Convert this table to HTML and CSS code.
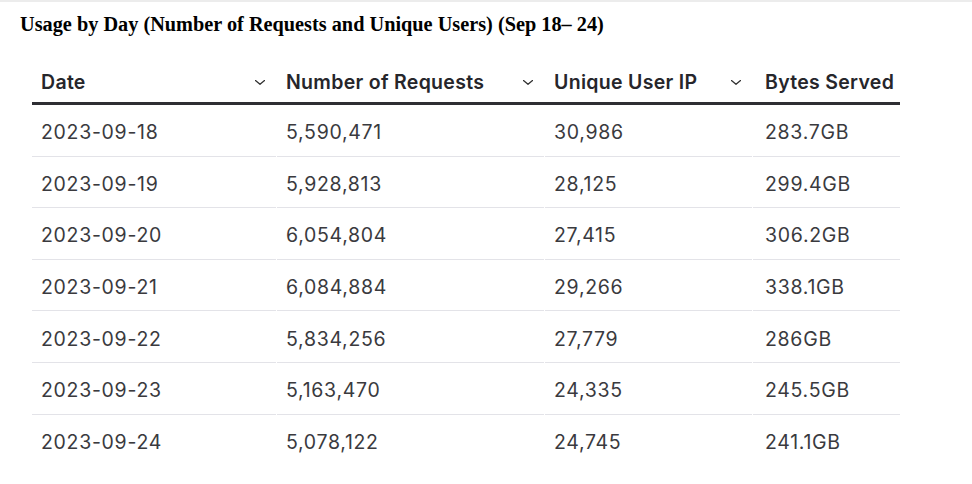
FILE: index.html
```html
<!DOCTYPE html>
<html>
<head>
<meta charset="utf-8">
<link rel="stylesheet" href="styles.css">
</head>
<body>
<div class="topbar"></div>
<h1 class="title">Usage by Day (Number of Requests and Unique Users) (Sep 18– 24)</h1>
<div class="table">
  <div class="row head">
    <div class="cell"><span>Date</span><svg class="chev" viewBox="0 0 10 5"><path d="M0.5 0.5 L5 4.3 L9.5 0.5"/></svg></div>
    <div class="cell"><span>Number of Requests</span><svg class="chev" viewBox="0 0 10 5"><path d="M0.5 0.5 L5 4.3 L9.5 0.5"/></svg></div>
    <div class="cell"><span>Unique User IP</span><svg class="chev" viewBox="0 0 10 5"><path d="M0.5 0.5 L5 4.3 L9.5 0.5"/></svg></div>
    <div class="cell last"><span>Bytes Served</span></div>
  </div>
  <div class="row"><div class="cell">2023-09-18</div><div class="cell">5,590,471</div><div class="cell">30,986</div><div class="cell last">283.7GB</div></div>
  <div class="row"><div class="cell">2023-09-19</div><div class="cell">5,928,813</div><div class="cell">28,125</div><div class="cell last">299.4GB</div></div>
  <div class="row"><div class="cell">2023-09-20</div><div class="cell">6,054,804</div><div class="cell">27,415</div><div class="cell last">306.2GB</div></div>
  <div class="row"><div class="cell">2023-09-21</div><div class="cell">6,084,884</div><div class="cell">29,266</div><div class="cell last">338.1GB</div></div>
  <div class="row"><div class="cell">2023-09-22</div><div class="cell">5,834,256</div><div class="cell">27,779</div><div class="cell last">286GB</div></div>
  <div class="row"><div class="cell">2023-09-23</div><div class="cell">5,163,470</div><div class="cell">24,335</div><div class="cell last">245.5GB</div></div>
  <div class="row nob"><div class="cell">2023-09-24</div><div class="cell">5,078,122</div><div class="cell">24,745</div><div class="cell last">241.1GB</div></div>
</div>
</body>
</html>
```
FILE: styles.css
```css
html, body {
  margin: 0;
  padding: 0;
  background: #ffffff;
}
body {
  width: 972px;
  height: 484px;
  overflow: hidden;
}
.topbar {
  height: 2px;
  background: #ececec;
}
.title {
  margin: 11px 0 0 20px;
  font-family: "Liberation Serif", "Times New Roman", serif;
  font-weight: bold;
  font-size: 20.3px;
  line-height: 23px;
  color: #000;
}
.table {
  margin: 28px 0 0 32px;
  width: 868px;
  font-family: Inter, "Noto Sans", sans-serif;
  font-size: 19.5px;
  color: #3a3a3e;
  white-space: nowrap;
}
.row {
  display: grid;
  grid-template-columns: 245px 268px 208px 147px;
}
.row .cell {
  display: flex;
  align-items: center;
  padding: 4px 0 0 9px;
  box-sizing: border-box;
  border-bottom: 1px solid #e3e3e8;
  margin-right: 1px;
  height: 51.6px;
  letter-spacing: 0.7px;
}
.row .cell.last {
  margin-right: 0;
  padding-left: 12px;
}
.row.nob .cell {
  border-bottom-color: transparent;
}
.row.head .cell {
  height: 41px;
  padding: 0 12px 2px 9px;
  justify-content: space-between;
  border-bottom: 3px solid #2e2e33;
  margin-right: 0;
  font-weight: 600;
  color: #26262b;
  letter-spacing: 0.3px;
}
.row.head .cell.last {
  padding: 0 0 2px 12px;
}
.chev {
  width: 10px;
  height: 5px;
  fill: none;
  stroke: #333;
  stroke-width: 1.3;
  stroke-linecap: round;
  stroke-linejoin: round;
}
```
